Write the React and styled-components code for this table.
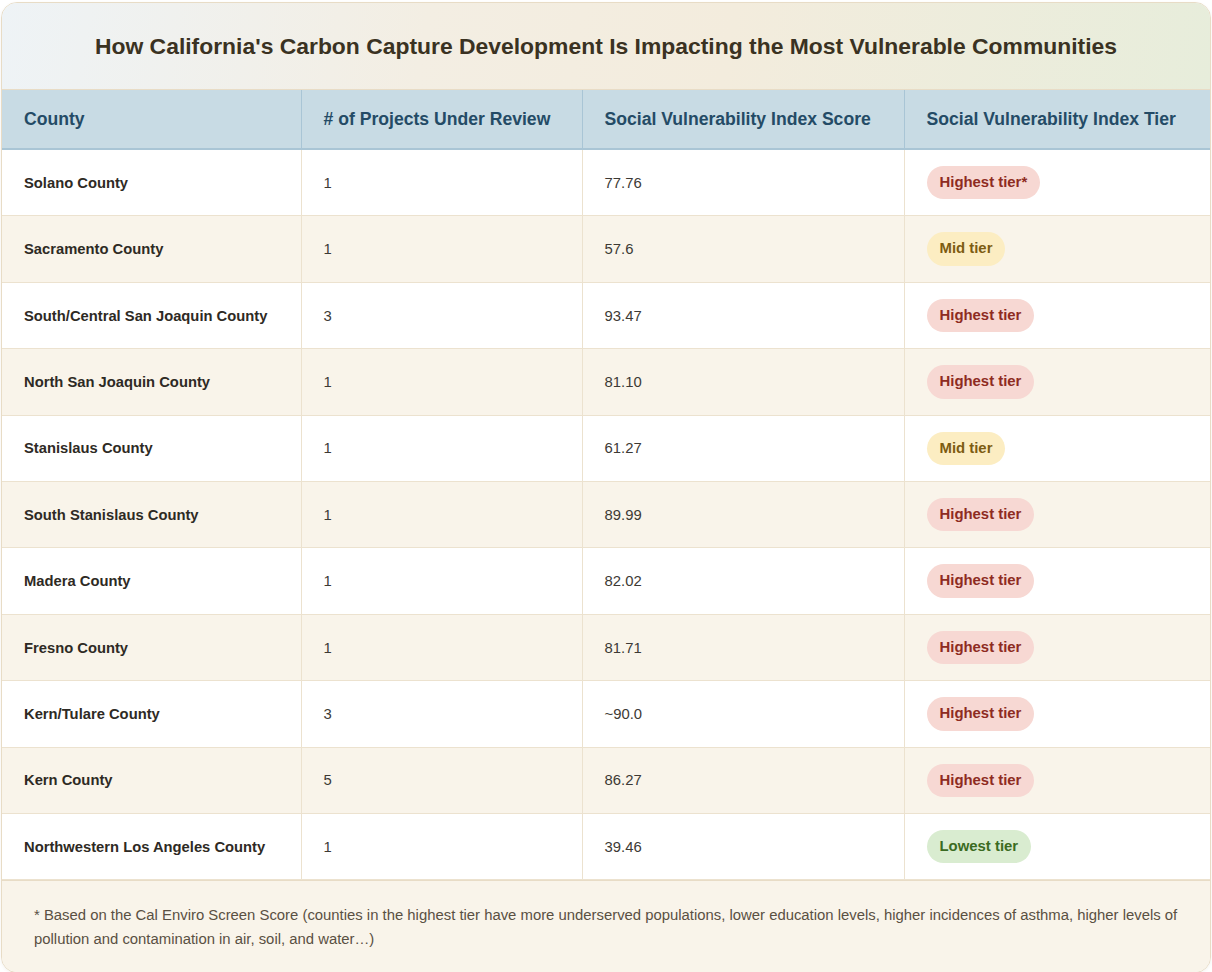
import React from "react";
import styled, { createGlobalStyle } from "styled-components";

const Global = createGlobalStyle`
  html, body { margin: 0; padding: 0; background: #ffffff; }
  body { font-family: "Liberation Sans", Arial, sans-serif; }
  * { box-sizing: border-box; }
`;

const Page = styled.div`
  padding: 2px 2px 0 1px;
`;

const Card = styled.div`
  width: 1210px;
  border: 1px solid #e8dcc6;
  border-radius: 16px;
  overflow: hidden;
  background: #ffffff;
  box-shadow: 0 1px 3px rgba(120, 100, 60, 0.08);
`;

const TitleBar = styled.div`
  padding: 30px 24px;
  background: linear-gradient(100deg, #eef3f6 0%, #f3eee3 35%, #f3ecdd 60%, #e7eddb 100%);
  border-bottom: 1px solid #e8dcc6;
  text-align: center;
`;

const Title = styled.h1`
  margin: 0;
  font-size: 22.9px;
  line-height: 26px;
  font-weight: 700;
  color: #3a3222;
`;

const Table = styled.table`
  width: 100%;
  border-collapse: collapse;
  table-layout: fixed;
`;

const HeadCell = styled.th`
  background: #c8dbe4;
  color: #244b66;
  font-size: 17.6px;
  line-height: 22px;
  font-weight: 700;
  text-align: left;
  padding: 18px 22px;
  border-bottom: 2px solid #a9c5d5;
  border-right: 1px solid #a9c5d5;
  &:last-child { border-right: none; }
`;

const Row = styled.tr`
  background: ${(p) => (p.$alt ? "#f9f4ea" : "#ffffff")};
`;

const Cell = styled.td`
  padding: 16px 22px;
  font-size: ${(p) => (p.$strong ? "14.75px" : "14.85px")};
  line-height: 20px;
  color: ${(p) => (p.$strong ? "#2e2a24" : "#3d3a35")};
  font-weight: ${(p) => (p.$strong ? 700 : 400)};
  border-bottom: 1px solid #ece2cf;
  border-right: 1px solid #ece2cf;
  vertical-align: middle;
  &:last-child { border-right: none; }
`;

const BadgeWrap = styled.div`
  display: flex;
  align-items: center;
`;

const tones = {
  high: { bg: "#f7d8d3", fg: "#8e2b22" },
  mid: { bg: "#fcedc2", fg: "#7d5c12" },
  low: { bg: "#d9ecd0", fg: "#3b6b22" },
};

const Badge = styled.span`
  display: inline-block;
  padding: 6px 13px;
  border-radius: 999px;
  font-size: 14.9px;
  line-height: 21.4px;
  font-weight: 700;
  background: ${(p) => tones[p.$tone].bg};
  color: ${(p) => tones[p.$tone].fg};
`;

const Footer = styled.div`
  background: #f9f4ea;
  border-top: 1px solid #e8dcc6;
  padding: 22px 32px 21px;
  font-size: 14.86px;
  line-height: 24px;
  color: #5a5043;
`;

const rows = [
  ["Solano County", "1", "77.76", "high", "Highest tier*"],
  ["Sacramento County", "1", "57.6", "mid", "Mid tier"],
  ["South/Central San Joaquin County", "3", "93.47", "high", "Highest tier"],
  ["North San Joaquin County", "1", "81.10", "high", "Highest tier"],
  ["Stanislaus County", "1", "61.27", "mid", "Mid tier"],
  ["South Stanislaus County", "1", "89.99", "high", "Highest tier"],
  ["Madera County", "1", "82.02", "high", "Highest tier"],
  ["Fresno County", "1", "81.71", "high", "Highest tier"],
  ["Kern/Tulare County", "3", "~90.0", "high", "Highest tier"],
  ["Kern County", "5", "86.27", "high", "Highest tier"],
  ["Northwestern Los Angeles County", "1", "39.46", "low", "Lowest tier"],
];

export default function App() {
  return (
    <Page>
      <Global />
      <Card>
        <TitleBar>
          <Title>
            How California's Carbon Capture Development Is Impacting the Most Vulnerable Communities
          </Title>
        </TitleBar>
        <Table>
          <colgroup>
            <col style={{ width: 299 }} />
            <col style={{ width: 281 }} />
            <col style={{ width: 322 }} />
            <col />
          </colgroup>
          <thead>
            <tr>
              <HeadCell>County</HeadCell>
              <HeadCell># of Projects Under Review</HeadCell>
              <HeadCell>Social Vulnerability Index Score</HeadCell>
              <HeadCell>Social Vulnerability Index Tier</HeadCell>
            </tr>
          </thead>
          <tbody>
            {rows.map(([county, n, score, tone, label], i) => (
              <Row key={county} $alt={i % 2 === 1}>
                <Cell $strong>{county}</Cell>
                <Cell>{n}</Cell>
                <Cell>{score}</Cell>
                <Cell>
                  <BadgeWrap>
                    <Badge $tone={tone}>{label}</Badge>
                  </BadgeWrap>
                </Cell>
              </Row>
            ))}
          </tbody>
        </Table>
        <Footer>
          * Based on the Cal Enviro Screen Score (counties in the highest tier have more underserved
          populations, lower education levels, higher incidences of asthma, higher levels of pollution
          and contamination in air, soil, and water…)
        </Footer>
      </Card>
    </Page>
  );
}
